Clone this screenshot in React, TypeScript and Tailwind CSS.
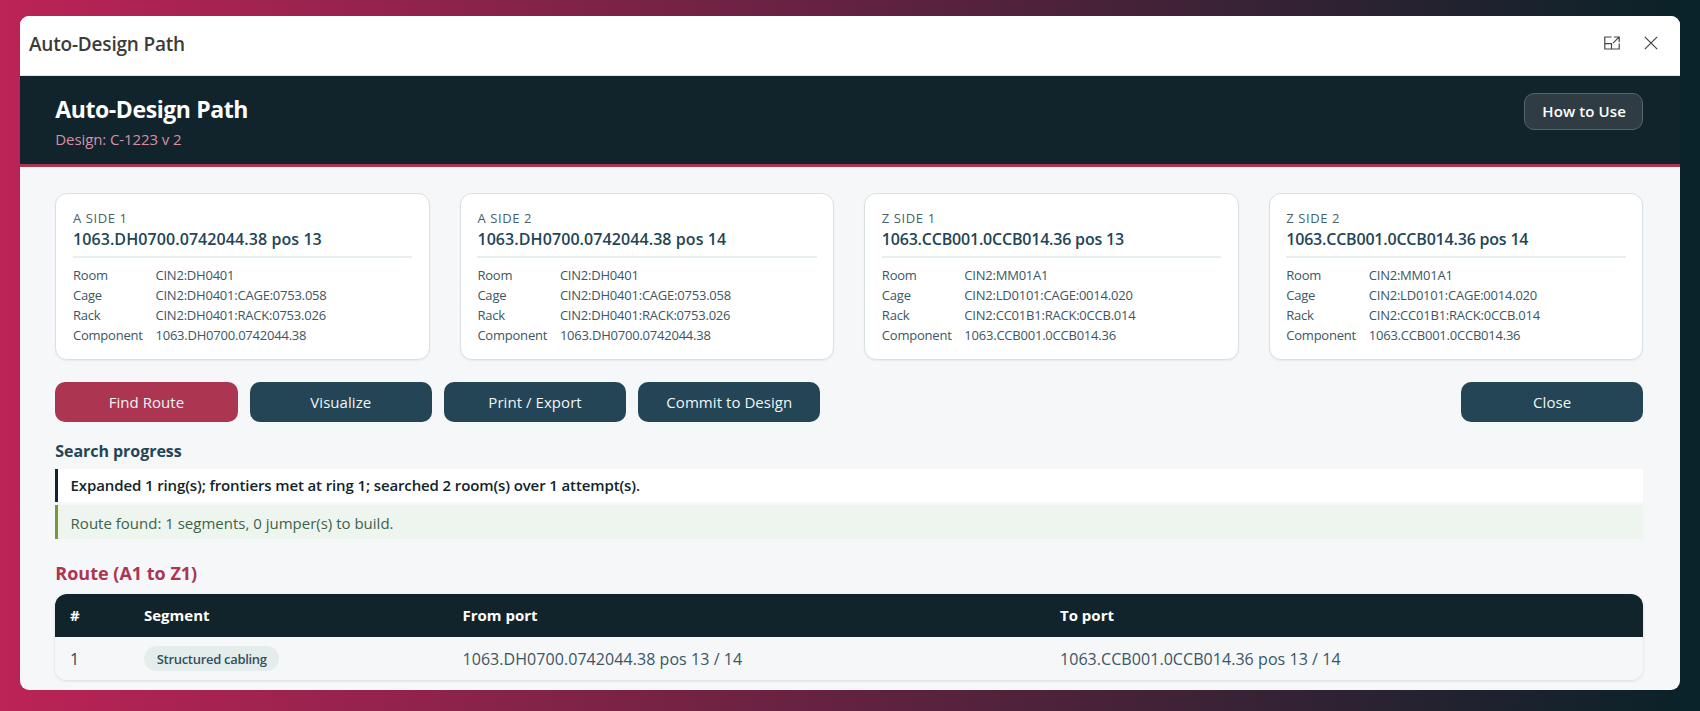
type Endpoint = {
  label: string;
  title: string;
  tracking: string;
  rows: [string, string][];
};

const A_ROWS: [string, string][] = [
  ["Room", "CIN2:DH0401"],
  ["Cage", "CIN2:DH0401:CAGE:0753.058"],
  ["Rack", "CIN2:DH0401:RACK:0753.026"],
  ["Component", "1063.DH0700.0742044.38"],
];

const Z_ROWS: [string, string][] = [
  ["Room", "CIN2:MM01A1"],
  ["Cage", "CIN2:LD0101:CAGE:0014.020"],
  ["Rack", "CIN2:CC01B1:RACK:0CCB.014"],
  ["Component", "1063.CCB001.0CCB014.36"],
];

const ENDPOINTS: Endpoint[] = [
  { label: "A SIDE 1", title: "1063.DH0700.0742044.38 pos 13", tracking: "tracking-[0.08px]", rows: A_ROWS },
  { label: "A SIDE 2", title: "1063.DH0700.0742044.38 pos 14", tracking: "tracking-[0.08px]", rows: A_ROWS },
  { label: "Z SIDE 1", title: "1063.CCB001.0CCB014.36 pos 13", tracking: "tracking-[-0.2px]", rows: Z_ROWS },
  { label: "Z SIDE 2", title: "1063.CCB001.0CCB014.36 pos 14", tracking: "tracking-[-0.2px]", rows: Z_ROWS },
];

function PopOutIcon() {
  return (
    <svg width="16" height="14" viewBox="0 0 16 14" fill="none" stroke="#444" strokeWidth="1.2">
      <path d="M7.5 1H.8v12h14.4V7.5M.8 7.7h6.7V13M9 7.2 15 1.2M10 1h5.2v5" />
    </svg>
  );
}

function CloseIcon() {
  return (
    <svg width="14" height="14" viewBox="0 0 14 14" fill="none" stroke="#444" strokeWidth="1.2">
      <path d="M.8.8l12.4 12.4M13.2.8.8 13.2" />
    </svg>
  );
}

function EndpointCard({ label, title, tracking, rows }: Endpoint) {
  return (
    <section className="h-[167px] rounded-xl border border-[#d9e0e3] bg-white px-[16.7px] pt-[15px] shadow-[0_1px_2px_rgba(20,50,60,0.06)]">
      <div className="text-[13px] leading-[18px] tracking-[0.6px] text-[#44606d]">{label}</div>
      <h2 className={"border-b-2 border-[#e8efef] pb-[5px] text-[16px] leading-6 font-semibold text-[#234555] " + tracking}>
        {title}
      </h2>
      <dl className="grid grid-cols-[82.5px_1fr] pt-[7px] text-[13px] leading-5 tracking-[-0.22px] text-[#3b5664]">
        {rows.map(([name, value]) => (
          <div key={name} className="contents">
            <dt>{name}</dt>
            <dd>{value}</dd>
          </div>
        ))}
      </dl>
    </section>
  );
}

function ActionButton({ children, primary = false }: { children: string; primary?: boolean }) {
  return (
    <button
      className={
        "h-10 w-[182.3px] rounded-[10px] text-[15px] tracking-[0.05px] text-[#f1f4f5] " +
        (primary ? "bg-[#ac3552]" : "bg-[#234555]")
      }
    >
      {children}
    </button>
  );
}

export default function App() {
  return (
    <div className="h-[711px] w-[1700px] bg-[linear-gradient(90deg,#bc2357,#0a2229_99%)] pt-4 pl-5 font-['Open_Sans',sans-serif] whitespace-nowrap">
      <main className="h-[674px] w-[1659.7px] overflow-hidden rounded-[9px] bg-[#f5f7f9]">
        <div className="flex h-[60px] justify-between border-b border-[#dfe7e5] bg-white pt-[13px] pr-[21.7px] pl-[9px]">
          <span className="pt-px text-[19px] leading-7 font-semibold tracking-[-0.2px] text-[#3b3b3b]">Auto-Design Path</span>
          <div className="flex h-7 items-center gap-6">
            <PopOutIcon />
            <CloseIcon />
          </div>
        </div>

        <header className="flex h-[91px] items-start justify-between border-b-3 border-[#ac3552] bg-[#12242b] pr-[36.4px] pl-[35.3px]">
          <div className="pt-[18px]">
            <h1 className="text-[23px] leading-[30px] font-bold tracking-[-0.41px] text-white">Auto-Design Path</h1>
            <p className="mt-1 text-[15px] leading-[22px] tracking-[-0.1px] text-[#d68fa8]">Design: C-1223 v 2</p>
          </div>
          <button className="mt-[17px] h-[37px] w-[119.3px] rounded-[10px] border border-[#596369] bg-[#303c43] pl-px text-[15px] font-semibold tracking-[0.1px] text-white">
            How to Use
          </button>
        </header>

        <div className="pt-[26px] pr-[36.4px] pl-[35.3px]">
          <div className="grid grid-cols-4 gap-[29.7px]">
            {ENDPOINTS.map((e) => (
              <EndpointCard key={e.label} {...e} />
            ))}
          </div>

          <div className="mt-[22px] flex gap-3">
            <ActionButton primary>Find Route</ActionButton>
            <ActionButton>Visualize</ActionButton>
            <ActionButton>Print / Export</ActionButton>
            <ActionButton>Commit to Design</ActionButton>
            <div className="ml-auto">
              <ActionButton>Close</ActionButton>
            </div>
          </div>

          <h3 className="mt-[17px] text-[16px] leading-6 font-bold tracking-[-0.05px] text-[#234555]">Search progress</h3>
          <div className="mt-[6px] h-[33px] border-l-3 border-[#12242b] bg-white pl-[12.3px] text-[15px] leading-[33px] font-semibold tracking-[-0.12px] text-[#12242b]">
            Expanded 1 ring(s); frontiers met at ring 1; searched 2 room(s) over 1 attempt(s).
          </div>
          <div className="mt-[3px] h-[33.5px] border-l-3 border-[#739a34] bg-[#eef5ee] pl-[12.3px] text-[15px] leading-[36px] text-[#3d6347]">
            Route found: 1 segments, 0 jumper(s) to build.
          </div>

          <h3 className="mt-[21.5px] text-[18px] leading-[26px] font-bold text-[#ac3552]">Route (A1 to Z1)</h3>
          <div className="mt-2 overflow-hidden rounded-xl shadow-[0_1px_3px_rgba(20,40,50,0.12)]">
            <div className="grid h-[43px] grid-cols-[74px_318.5px_597.5px_1fr] items-center bg-[#12242b] pl-[14.7px] text-[15px] font-bold text-white">
              <span>#</span>
              <span>Segment</span>
              <span>From port</span>
              <span>To port</span>
            </div>
            <div className="grid h-[43px] grid-cols-[74px_318.5px_597.5px_1fr] items-center bg-[#f5f7f9] pl-[14.7px] text-[16px] tracking-[0.06px] text-[#3b5664]">
              <span className="text-[#34464e]">1</span>
              <span>
                <span className="block h-[25.5px] w-[135.5px] rounded-full bg-[#e5ecec] text-center text-[13px] leading-[26px] font-semibold tracking-[-0.3px] text-[#315060]">
                  Structured cabling
                </span>
              </span>
              <span>1063.DH0700.0742044.38 pos 13 / 14</span>
              <span>1063.CCB001.0CCB014.36 pos 13 / 14</span>
            </div>
          </div>
        </div>
      </main>
    </div>
  );
}
